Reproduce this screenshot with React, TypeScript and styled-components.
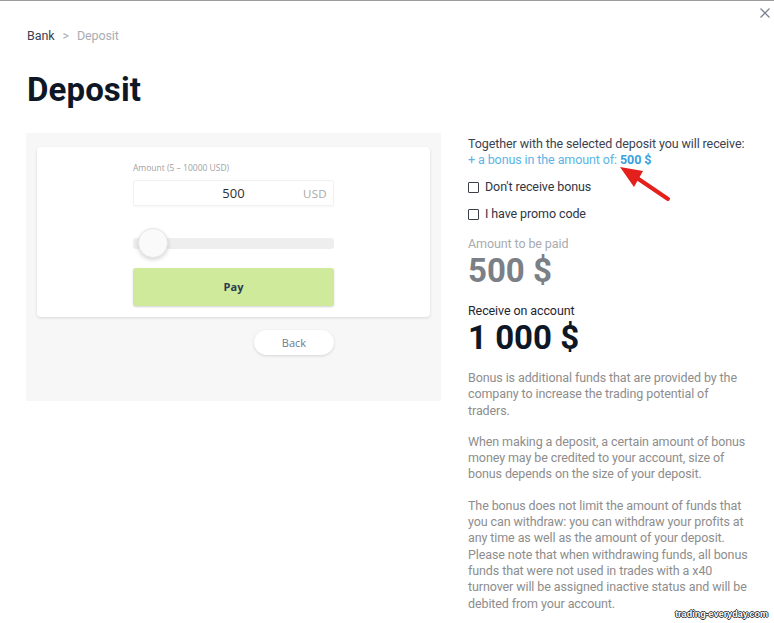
import React from 'react';
import styled, { createGlobalStyle } from 'styled-components';

const Global = createGlobalStyle`
  html, body { margin: 0; padding: 0; background: #fff; }
  body { font-family: Roboto, "Liberation Sans", sans-serif; -webkit-font-smoothing: antialiased; }
  * { box-sizing: border-box; }
`;

const Page = styled.div`
  position: relative;
  width: 774px;
  height: 623px;
  border-top: 1px solid #9c9c9c;
  padding: 26px 0 0 26px;
  overflow: hidden;
  background: #fff;
`;

const Breadcrumb = styled.nav`
  display: flex;
  align-items: center;
  margin-left: 1px;
  margin-top: 1px;
  font-size: 12.5px;
  line-height: 16px;
  letter-spacing: -0.1px;
`;

const Crumb = styled.span<{ $current?: boolean }>`
  color: ${(p) => (p.$current ? '#a9adb3' : '#394150')};
`;

const Sep = styled.span`
  color: #a9adb3;
  margin: 0 8px;
`;

const Title = styled.h1`
  margin: 26px 0 0 1px;
  font-size: 33px;
  line-height: 40px;
  font-weight: 700;
  color: #0e1726;
  letter-spacing: 0.1px;
`;

const Columns = styled.div`
  display: flex;
  align-items: flex-start;
  gap: 27px;
  margin-top: 23px;
`;

const LeftPanel = styled.section`
  width: 415px;
  height: 268px;
  background: #f7f7f7;
  padding: 14px 11px;
  font-family: "Open Sans", "Liberation Sans", sans-serif;
`;

const Card = styled.div`
  height: 170px;
  background: #fff;
  border-radius: 4px;
  box-shadow: 0 1px 3px rgba(0, 0, 0, 0.13);
  padding-top: 15px;
  display: flex;
  flex-direction: column;
  align-items: center;
`;

const Form = styled.div`
  width: 201px;
  display: flex;
  flex-direction: column;
`;

const FieldLabel = styled.div`
  font-size: 8.5px;
  line-height: 12px;
  color: #a2a2a2;
  margin-bottom: 6px;
`;

const AmountBox = styled.div`
  height: 26px;
  border: 1px solid #f1f1f1;
  border-radius: 2px;
  box-shadow: 0 1px 2px rgba(0, 0, 0, 0.04);
  display: grid;
  grid-template-columns: 1fr auto 1fr;
  align-items: center;
  padding: 0 6px;
`;

const AmountValue = styled.span`
  grid-column: 2;
  font-size: 13px;
  color: #2e2e2e;
`;

const AmountUnit = styled.span`
  grid-column: 3;
  justify-self: end;
  font-size: 11.5px;
  color: #a8a8a8;
  letter-spacing: 0.3px;
`;

const SliderWrap = styled.div`
  position: relative;
  margin-top: 22px;
  height: 30px;
  display: flex;
  align-items: center;
`;

const Track = styled.div`
  width: 100%;
  height: 11px;
  border-radius: 3px;
  background: #eeeeee;
`;

const Thumb = styled.div<{ $left: number }>`
  position: absolute;
  top: 0;
  left: ${(p) => p.$left}px;
  width: 30px;
  height: 30px;
  border-radius: 50%;
  background: #fafafa;
  border: 1px solid #e6e6e6;
  box-shadow: 0 2px 4px rgba(0, 0, 0, 0.16);
`;

const PayButton = styled.button`
  margin-top: 10px;
  height: 38px;
  border: none;
  border-radius: 3px;
  background: #cfea9b;
  box-shadow: 0 1px 2px rgba(0, 0, 0, 0.18);
  font-family: "Open Sans", "Liberation Sans", sans-serif;
  font-weight: 700;
  font-size: 11px;
  color: #2b3b50;
  padding: 0 0 2px;
`;

const BackRow = styled.div`
  width: 201px;
  margin: 13px auto 0;
  display: flex;
  justify-content: flex-end;
`;

const BackButton = styled.button`
  width: 80px;
  height: 25px;
  border: none;
  border-radius: 13px;
  background: #fff;
  box-shadow: 0 1px 3px rgba(0, 0, 0, 0.14);
  font-family: "Open Sans", "Liberation Sans", sans-serif;
  font-size: 11px;
  color: #6c7a8e;
`;

const RightColumn = styled.section`
  width: 284px;
  padding-top: 3px;
  display: flex;
  flex-direction: column;
  font-size: 12.5px;
  line-height: 16px;
  letter-spacing: -0.1px;
`;

const Intro = styled.div`
  color: #3a4250;
  white-space: nowrap;
`;

const BonusLine = styled.div`
  color: #5bb4e6;
  strong {
    color: #3aa1dd;
    font-weight: 700;
  }
`;

const CheckRow = styled.label`
  display: flex;
  align-items: center;
  gap: 6px;
  margin-top: 11px;
  color: #2f3644;
`;

const Box = styled.span`
  width: 11px;
  height: 11px;
  border: 1.5px solid #3a3f48;
  border-radius: 1px;
`;

const SmallLabel = styled.div<{ $dark?: boolean }>`
  margin-top: ${(p) => (p.$dark ? 15 : 14)}px;
  color: ${(p) => (p.$dark ? '#1f2633' : '#a8abb0')};
`;

const BigAmount = styled.div<{ $dark?: boolean }>`
  margin-top: 2px;
  font-size: 33px;
  line-height: 34px;
  font-weight: 700;
  letter-spacing: 0;
  color: ${(p) => (p.$dark ? '#0e1726' : '#7b7f86')};
`;

const Info = styled.p`
  margin: 15px 0 0;
  color: #8d8d8d;
  line-height: 16.3px;
`;

const Close = styled.svg`
  position: absolute;
  top: 7px;
  left: 760px;
`;

const Arrow = styled.svg`
  position: absolute;
  left: 600px;
  top: 150px;
`;

const Watermark = styled.div`
  position: absolute;
  right: 6px;
  bottom: 4px;
  font-family: "Liberation Sans", sans-serif;
  font-size: 9px;
  font-weight: 700;
  color: #fff;
  text-shadow: -1px 0 #333, 1px 0 #333, 0 -1px #333, 0 1px #333;
`;

export default function App() {
  return (
    <>
      <Global />
      <Page>
        <Breadcrumb>
          <Crumb>Bank</Crumb>
          <Sep>&gt;</Sep>
          <Crumb $current>Deposit</Crumb>
        </Breadcrumb>
        <Title>Deposit</Title>
        <Columns>
          <LeftPanel>
            <Card>
              <Form>
                <FieldLabel>Amount (5 – 10000 USD)</FieldLabel>
                <AmountBox>
                  <AmountValue>500</AmountValue>
                  <AmountUnit>USD</AmountUnit>
                </AmountBox>
                <SliderWrap>
                  <Track />
                  <Thumb $left={5} />
                </SliderWrap>
                <PayButton>Pay</PayButton>
              </Form>
            </Card>
            <BackRow>
              <BackButton>Back</BackButton>
            </BackRow>
          </LeftPanel>
          <RightColumn>
            <Intro>Together with the selected deposit you will receive:</Intro>
            <BonusLine>
              + a bonus in the amount of: <strong>500 $</strong>
            </BonusLine>
            <CheckRow>
              <Box />
              Don't receive bonus
            </CheckRow>
            <CheckRow>
              <Box />
              I have promo code
            </CheckRow>
            <SmallLabel>Amount to be paid</SmallLabel>
            <BigAmount>500 $</BigAmount>
            <SmallLabel $dark>Receive on account</SmallLabel>
            <BigAmount $dark>1 000 $</BigAmount>
            <Info>
              Bonus is additional funds that are provided by the company to increase the trading
              potential of traders.
            </Info>
            <Info>
              When making a deposit, a certain amount of bonus money may be credited to your
              account, size of bonus depends on the size of your deposit.
            </Info>
            <Info>
              The bonus does not limit the amount of funds that you can withdraw: you can withdraw
              your profits at any time as well as the amount of your deposit. Please note that when
              withdrawing funds, all bonus funds that were not used in trades with a x40 turnover
              will be assigned inactive status and will be debited from your account.
            </Info>
          </RightColumn>
        </Columns>
        <Close width="10" height="10" viewBox="0 0 10 10">
          <path d="M0.5 0.5 L9.5 9.5 M9.5 0.5 L0.5 9.5" stroke="#7d8593" strokeWidth="1.3" />
        </Close>
        <Arrow width="80" height="60" viewBox="0 0 80 60">
          <line x1="68" y1="48" x2="37" y2="27" stroke="#e3201b" strokeWidth="4" strokeLinecap="round" />
          <polygon points="20,16 43,20 34,36" fill="#e3201b" />
        </Arrow>
        <Watermark>trading-everyday.com</Watermark>
      </Page>
    </>
  );
}
